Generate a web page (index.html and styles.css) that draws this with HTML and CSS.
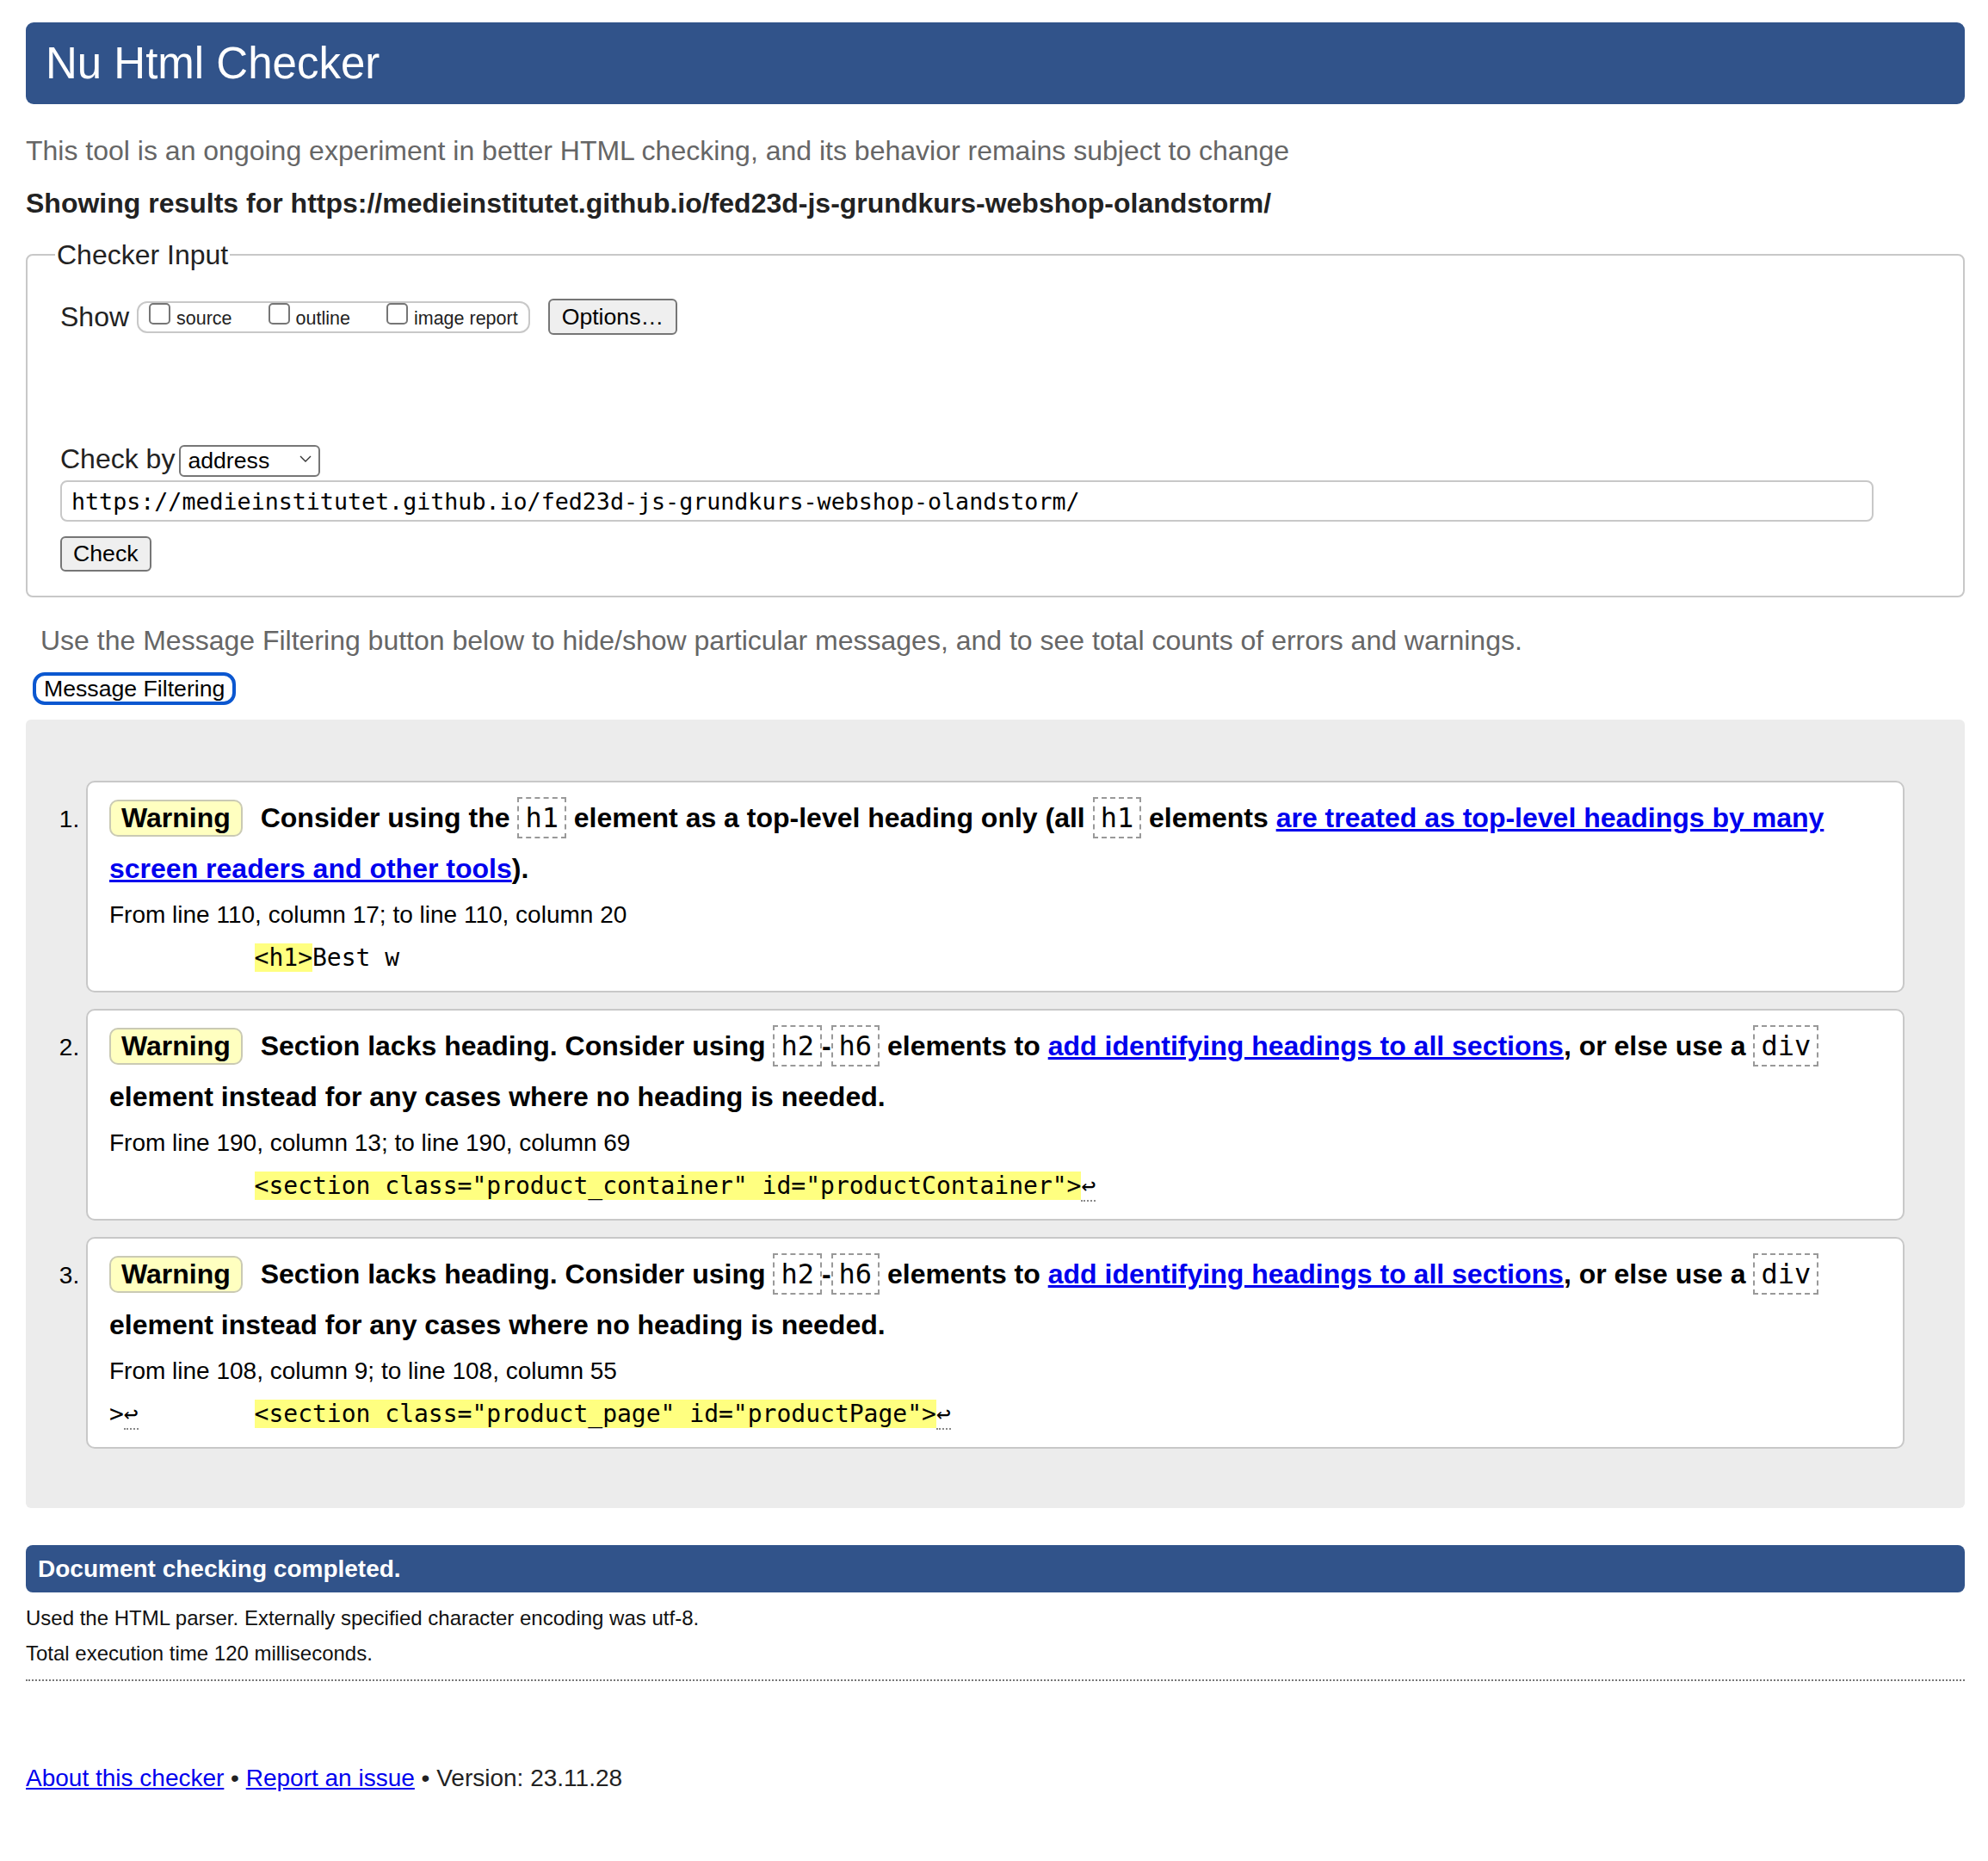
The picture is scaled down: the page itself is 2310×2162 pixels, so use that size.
FILE: index.html
```html
<!DOCTYPE html>
<html lang="en">
<head>
<meta charset="utf-8">
<title>Showing results for https://medieinstitutet.github.io/fed23d-js-grundkurs-webshop-olandstorm/ - Nu Html Checker</title>
<link rel="stylesheet" href="styles.css">
</head>
<body>
<h1 class="title">Nu Html Checker</h1>
<p class="intro">This tool is an ongoing experiment in better HTML checking, and its behavior remains subject to change</p>
<p class="showing">Showing results for https://medieinstitutet.github.io/fed23d-js-grundkurs-webshop-olandstorm/</p>

<form class="checker">
  <fieldset class="input-set">
    <legend>Checker Input</legend>
    <div class="show-row">
      <span class="show-label">Show</span>
      <span class="group">
        <label><input type="checkbox"><span>source</span></label>
        <label><input type="checkbox"><span>outline</span></label>
        <label><input type="checkbox"><span>image report</span></label>
      </span>
      <button type="button" class="btn">Options…</button>
    </div>
    <div class="checkby-row">
      <span>Check by</span>
      <span class="select-wrap">
        <select class="select"><option>address</option></select>
        <svg class="chevron" width="14" height="8" viewBox="0 0 14 8"><path d="M1 1 L7 7 L13 1" fill="none" stroke="#333" stroke-width="1.4"/></svg>
      </span>
    </div>
    <input class="url" type="text" value="https://medieinstitutet.github.io/fed23d-js-grundkurs-webshop-olandstorm/">
    <button type="button" class="btn check-btn">Check</button>
  </fieldset>
</form>

<p class="filter-note">Use the Message Filtering button below to hide/show particular messages, and to see total counts of errors and warnings.</p>
<button type="button" class="filter-btn">Message Filtering</button>

<div class="results">
  <ol class="messages">
    <li class="msg">
      <p class="msg-text"><span class="badge">Warning</span> Consider using the <code>h1</code> element as a top-level heading only (all <code>h1</code> elements <a href="#">are treated as top-level headings by many screen readers and other tools</a>).</p>
      <p class="location">From line 110, column 17; to line 110, column 20</p>
      <p class="extract">          <mark>&lt;h1&gt;</mark>Best w</p>
    </li>
    <li class="msg">
      <p class="msg-text"><span class="badge">Warning</span> Section lacks heading. Consider using <code>h2</code>-<code>h6</code> elements to <a href="#">add identifying headings to all sections</a>, or else use a <code>div</code> element instead for any cases where no heading is needed.</p>
      <p class="location">From line 190, column 13; to line 190, column 69</p>
      <p class="extract">          <mark>&lt;section class="product_container" id="productContainer"&gt;</mark><span class="lf">↩</span></p>
    </li>
    <li class="msg">
      <p class="msg-text"><span class="badge">Warning</span> Section lacks heading. Consider using <code>h2</code>-<code>h6</code> elements to <a href="#">add identifying headings to all sections</a>, or else use a <code>div</code> element instead for any cases where no heading is needed.</p>
      <p class="location">From line 108, column 9; to line 108, column 55</p>
      <p class="extract">&gt;<span class="lf">↩</span>        <mark>&lt;section class="product_page" id="productPage"&gt;</mark><span class="lf">↩</span></p>
    </li>
  </ol>
</div>

<p class="completed">Document checking completed.</p>
<div class="details">
  <p>Used the HTML parser. Externally specified character encoding was utf-8.</p>
  <p>Total execution time 120 milliseconds.</p>
</div>
<hr class="dotted">
<p class="footer"><a href="#">About this checker</a> • <a href="#">Report an issue</a> • Version: 23.11.28</p>
</body>
</html>
```
FILE: styles.css
```css
* { box-sizing: border-box; }

html { background: #fff; }

body {
  margin: 0;
  padding: 26px 27px 60px 30px;
  font-family: "Liberation Sans", Arial, Helvetica, sans-serif;
  font-size: 32px;
  color: #000;
}

.title {
  margin: 0;
  height: 95px;
  line-height: 95px;
  padding-left: 23px;
  font-size: 51px;
  font-weight: normal;
  color: #fff;
  background: #31538a;
  border-radius: 9px;
}

.intro {
  margin: 35px 0 0;
  line-height: 38px;
  color: #666;
}

.showing {
  margin: 23px 0 0;
  line-height: 38px;
  font-weight: bold;
  color: #222;
}

.checker { margin: 23px 0 0; }

.input-set {
  margin: 0;
  min-width: 0;
  padding: 33px 38px 28px;
  border: 2px solid #c8c8c8;
  border-radius: 8px;
  color: #222;
}

.input-set legend {
  padding: 0 2px;
  margin-left: -6px;
  line-height: 36px;
  font-size: 32px;
}

.show-row {
  display: flex;
  align-items: center;
  height: 42px;
}

.show-label { margin-right: 9px; }

.group {
  display: flex;
  align-items: flex-start;
  height: 37px;
  padding: 0 12px;
  border: 2px solid #c8c8c8;
  border-radius: 12px;
  font-size: 21.5px;
  margin-right: 21px;
}

.group label {
  display: flex;
  align-items: baseline;
  margin-right: 42px;
}

.group label:last-child { margin-right: 0; }

.group input {
  appearance: none;
  -webkit-appearance: none;
  width: 25px;
  height: 25px;
  margin: 0 7px 0 0;
  border: 2px solid #767676;
  border-radius: 5px;
  background: #fff;
}

.btn {
  height: 42px;
  padding: 0 14px;
  font-family: "Liberation Sans", Arial, sans-serif;
  font-size: 26.67px;
  color: #000;
  background: #efefef;
  border: 2px solid #767676;
  border-radius: 6px;
}

.checkby-row {
  display: flex;
  align-items: center;
  gap: 5px;
  margin-top: 126px;
  height: 37px;
}

.select-wrap {
  position: relative;
  display: block;
  width: 164px;
  height: 37px;
}

.select {
  appearance: none;
  -webkit-appearance: none;
  width: 100%;
  height: 100%;
  padding: 0 0 0 8px;
  font-family: "Liberation Sans", Arial, sans-serif;
  font-size: 26.67px;
  color: #000;
  background: #fff;
  border: 2px solid #767676;
  border-radius: 6px;
}

.chevron {
  position: absolute;
  right: 10px;
  top: 14px;
  pointer-events: none;
}

.url {
  display: block;
  margin-top: 6px;
  width: calc(100% - 66px);
  height: 48px;
  padding: 0 11px;
  font-family: "DejaVu Sans Mono", "Liberation Mono", monospace;
  font-size: 26.67px;
  color: #000;
  border: 2px solid #c8c8c8;
  border-radius: 8px;
}

.check-btn {
  display: block;
  margin-top: 17px;
  height: 41px;
  padding: 0 13px;
}

.filter-note {
  margin: 31px 0 0;
  padding-left: 17px;
  line-height: 38px;
  color: #666;
}

.filter-btn {
  display: block;
  margin: 18px 0 0 8px;
  height: 38px;
  padding: 0 9px;
  font-family: "Liberation Sans", Arial, sans-serif;
  font-size: 26.67px;
  color: #000;
  background: #fff;
  border: 4px solid #0b57d0;
  border-radius: 14px;
}

.results {
  margin-top: 17px;
  padding: 71px 70px 69px;
  background: #ececec;
  border-radius: 6px;
}

.messages {
  margin: 0;
  padding: 0;
}

.msg {
  margin: 0 0 19px;
  padding: 12px 25px 19px;
  font-size: 28px;
  background: #fff;
  border: 2px solid #c8c8c8;
  border-radius: 10px;
}

.msg:last-child { margin-bottom: 0; }

.msg-text {
  margin: 0;
  font-size: 32px;
  font-weight: bold;
  line-height: 59px;
}

.badge {
  display: inline-block;
  padding: 0 12px;
  margin-right: 12px;
  line-height: 39px;
  background: #ffffc0;
  border: 2px solid #cacab4;
  border-radius: 10px;
}

.msg-text code {
  font-family: "DejaVu Sans Mono", "Liberation Mono", monospace;
  font-size: 32px;
  font-weight: normal;
  padding: 3px 7px;
  border: 2px dashed #999;
}

a { color: #00e; text-decoration: underline; }

.location {
  margin: 4px 0 0;
  line-height: 39px;
}

.extract {
  margin: 11px 0 0;
  line-height: 39px;
  font-family: "DejaVu Sans Mono", "Liberation Mono", monospace;
  white-space: pre;
}

mark {
  background: #ffff80;
  color: #000;
}

.lf {
  border-bottom: 2px dotted #888;
}

.completed {
  margin: 43px 0 0;
  height: 55px;
  line-height: 55px;
  padding-left: 14px;
  font-size: 28px;
  font-weight: bold;
  color: #fff;
  background: #31538a;
  border-radius: 8px;
}

.details {
  margin-top: 9px;
  font-size: 24px;
  line-height: 41px;
  color: #111;
}

.details p { margin: 0; }

.dotted {
  margin: 10px 0 0;
  height: 0;
  border: 0;
  border-top: 2px dotted #777;
}

.footer {
  margin: 93px 0 0;
  font-size: 28px;
  line-height: 40px;
  color: #222;
}
```
